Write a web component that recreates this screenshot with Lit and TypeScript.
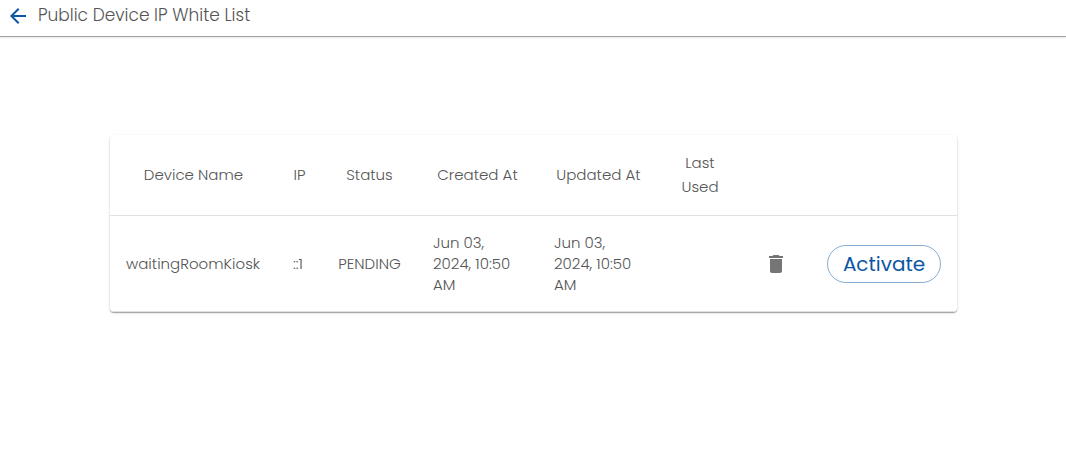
import { LitElement, html, css } from "lit";
import { customElement, state } from "lit/decorators.js";

interface Device {
  name: string;
  ip: string;
  status: string;
  createdAt: string;
  updatedAt: string;
  lastUsed: string;
}

@customElement("app-root")
export class AppRoot extends LitElement {
  static styles = css`
    :host {
      display: block;
      min-height: 100vh;
      background: #fff;
      color: #555;
      font-family: Poppins, Inter, sans-serif;
      font-weight: 300;
    }
    .bar {
      display: flex;
      align-items: center;
      gap: 10px;
      padding: 3px 8px 9px;
      border-bottom: 1px solid #a3a3a3;
      box-shadow: 0 1px 2px rgba(0, 0, 0, 0.1);
    }
    .title {
      margin: 0;
      font-size: 17px;
      line-height: 24px;
      font-weight: 300;
    }
    button {
      font: inherit;
      cursor: pointer;
      background: none;
      border: 0;
      padding: 0;
    }
    .back {
      display: flex;
      color: #0b57a4;
    }
    .trash {
      display: inline-flex;
      padding: 8px;
      color: #757575;
    }
    .icon {
      display: block;
      fill: currentColor;
    }
    .content {
      padding: 98px 109px 0 110px;
    }
    .card {
      border-radius: 4px;
      overflow: hidden;
      box-shadow: 0 1px 1px rgba(0, 0, 0, 0.3), 0 1px 3px rgba(0, 0, 0, 0.14);
    }
    table {
      width: 100%;
      table-layout: fixed;
      border-collapse: collapse;
      font-size: 15px;
    }
    .c-name { width: 167px; }
    .c-ip { width: 45px; }
    .c-status { width: 95px; }
    .c-date { width: 121px; }
    .c-used { width: 82px; }
    .c-delete { width: 70px; }
    .c-action { width: 146px; }
    th,
    td {
      padding: 16px;
      border-bottom: 1px solid #e0e0e0;
      font-weight: 300;
      vertical-align: middle;
    }
    th {
      text-align: center;
      line-height: 24px;
    }
    td {
      text-align: left;
      line-height: 21px;
    }
    .snug {
      padding-left: 0;
      padding-right: 0;
      text-align: center;
    }
    .activate {
      width: 100%;
      height: 38px;
      border: 1px solid #85abd1;
      border-radius: 19px;
      color: #0b57a4;
      font-size: 20px;
      line-height: 36px;
      font-weight: 400;
    }
  `;

  @state() private devices: Device[] = [
    {
      name: "waitingRoomKiosk",
      ip: "::1",
      status: "PENDING",
      createdAt: "Jun 03, 2024, 10:50 AM",
      updatedAt: "Jun 03, 2024, 10:50 AM",
      lastUsed: "",
    },
  ];

  render() {
    return html`
      <header class="bar">
        <button class="back" type="button" aria-label="Back">
          <svg class="icon" width="20" height="24" viewBox="2 -1 20 24" aria-hidden="true">
            <path d="M20 11H7.83l5.59-5.59L12 4l-8 8 8 8 1.41-1.41L7.83 13H20v-2z" />
          </svg>
        </button>
        <h1 class="title">Public Device IP White List</h1>
      </header>
      <main class="content">
        <div class="card">
          <table>
            <colgroup>
              <col class="c-name" />
              <col class="c-ip" />
              <col class="c-status" />
              <col class="c-date" />
              <col class="c-date" />
              <col class="c-used" />
              <col class="c-delete" />
              <col class="c-action" />
            </colgroup>
            <thead>
              <tr>
                <th scope="col">Device Name</th>
                <th scope="col">IP</th>
                <th scope="col" class="snug">Status</th>
                <th scope="col">Created At</th>
                <th scope="col">Updated At</th>
                <th scope="col">Last Used</th>
                <th></th>
                <th></th>
              </tr>
            </thead>
            <tbody>
              ${this.devices.map(
                (d) => html`
                  <tr>
                    <td>${d.name}</td>
                    <td>${d.ip}</td>
                    <td class="snug">${d.status}</td>
                    <td>${d.createdAt}</td>
                    <td>${d.updatedAt}</td>
                    <td>${d.lastUsed}</td>
                    <td class="snug">
                      <button class="trash" type="button" aria-label="Delete">
                        <svg class="icon" width="24" height="24" viewBox="0 0 24 24" aria-hidden="true">
                          <path d="M6 19c0 1.1.9 2 2 2h8c1.1 0 2-.9 2-2V7H6v12zM19 4h-3.5l-1-1h-5l-1 1H5v2h14V4z" />
                        </svg>
                      </button>
                    </td>
                    <td><button class="activate" type="button">Activate</button></td>
                  </tr>
                `
              )}
            </tbody>
          </table>
        </div>
      </main>
    `;
  }
}
